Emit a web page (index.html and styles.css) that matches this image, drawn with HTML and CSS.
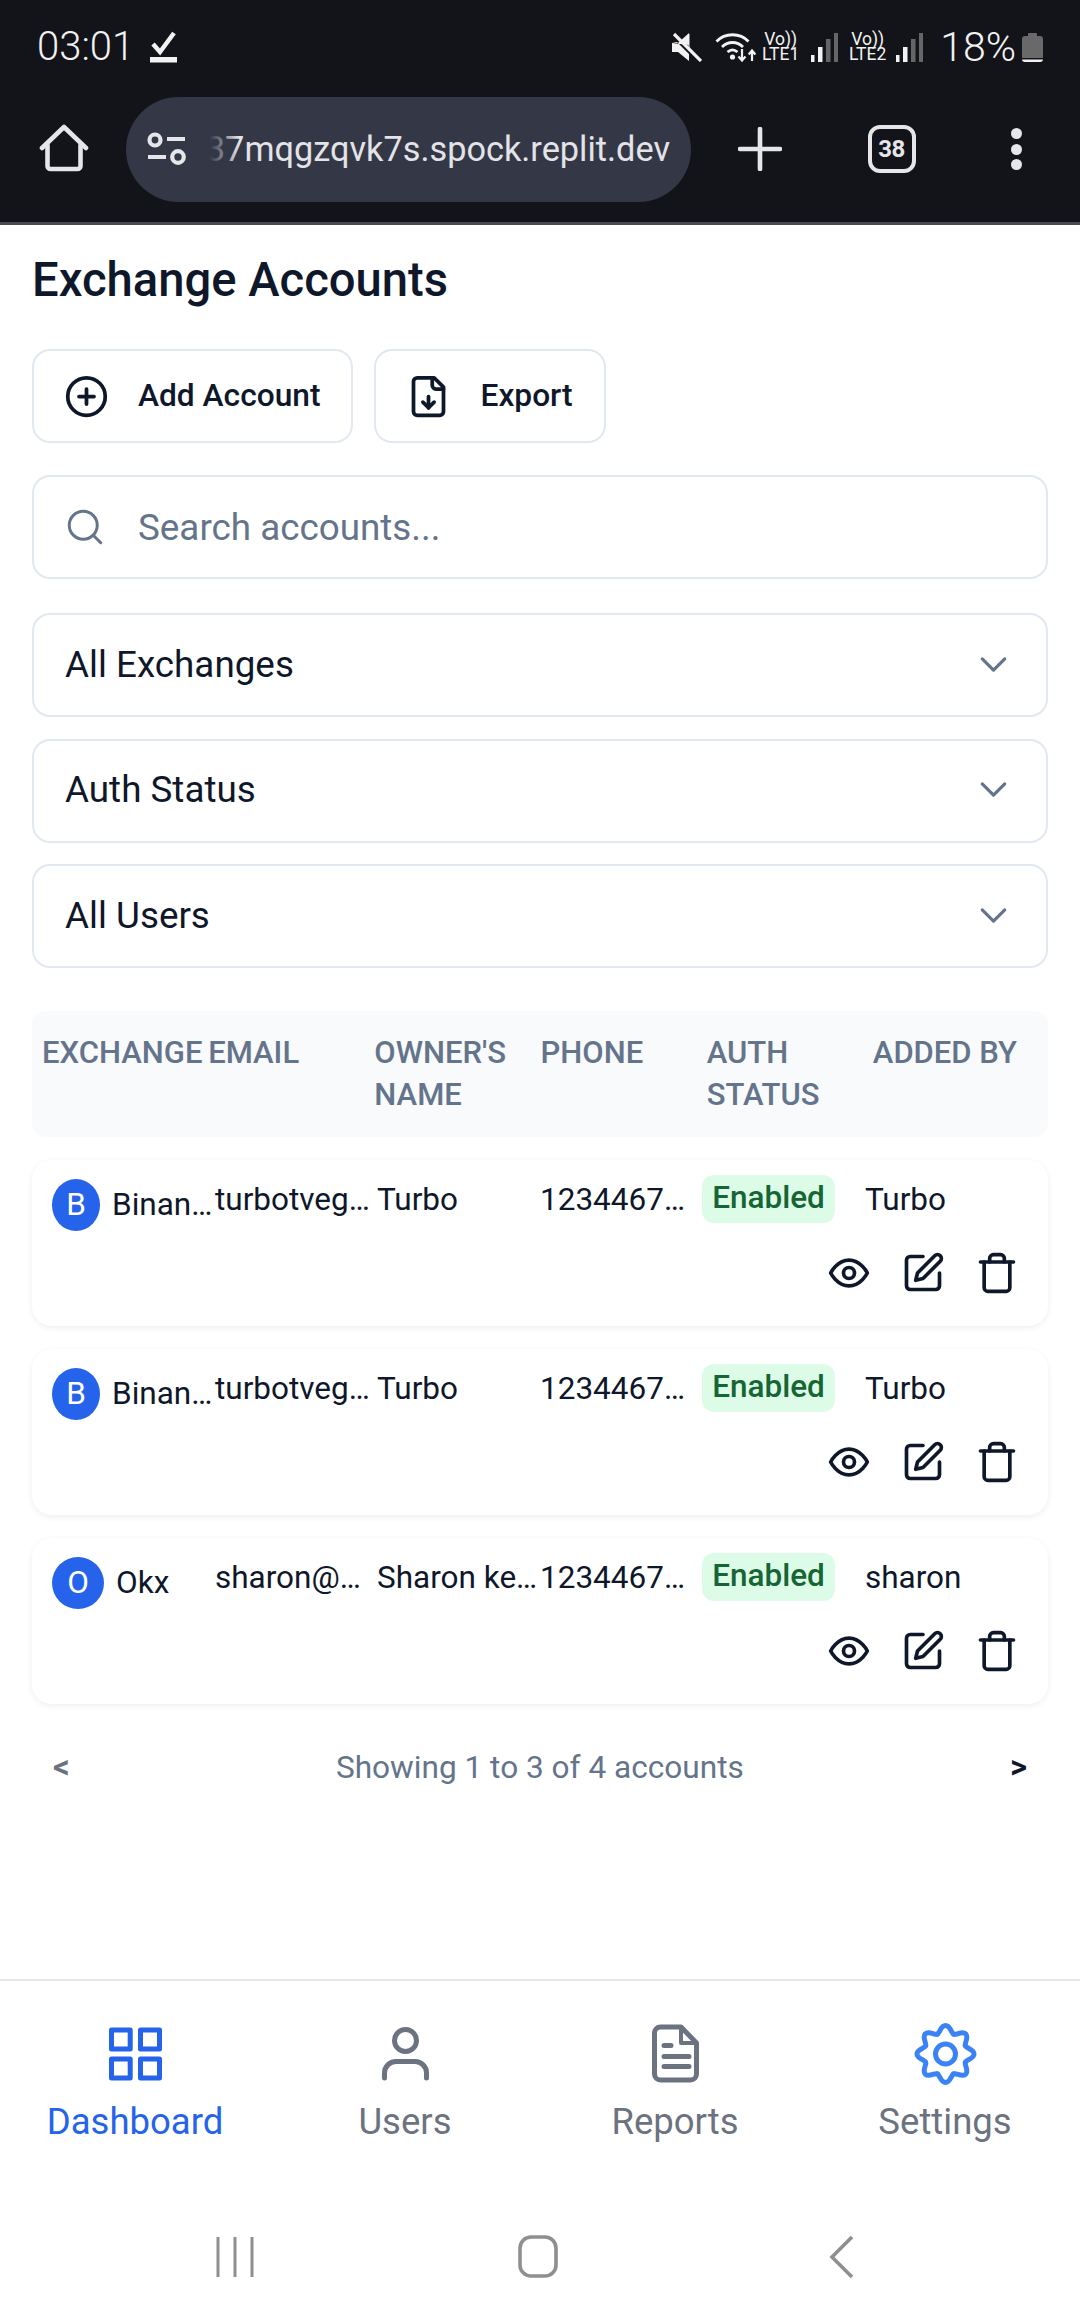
FILE: index.html
```html
<!DOCTYPE html>
<html lang="en">
<head>
<meta charset="utf-8">
<title>Exchange Accounts</title>
<link rel="stylesheet" href="styles.css">
</head>
<body>
<div class="app">
  <header class="chrome">
    <div class="status">
      <div class="status-left">
        <span class="time">03:01</span>
        <svg class="ic-check" viewBox="0 0 28 32" width="28" height="32"><path d="M3 13l7 8L24 2" fill="none" stroke="#f2f2f2" stroke-width="4.5"/><rect x="0" y="26" width="27" height="5.5" fill="#f2f2f2"/></svg>
      </div>
      <div class="status-right">
        <svg viewBox="0 0 30 30" width="30" height="30"><path d="M0 11h6L17 1v12zM0 11v9h6l11 9V22L5 10z" fill="#f2f2f2"/><path d="M2 2l27 27" stroke="#f2f2f2" stroke-width="3.2"/><path d="M17 2v17" stroke="#f2f2f2" stroke-width="1"/></svg>
        <svg class="ml13" viewBox="0 0 41 30" width="41" height="30"><g fill="none" stroke="#f2f2f2" stroke-width="2.8"><path d="M1.5 9.5C10 0.5 25 0.5 33.5 9.5"/><path d="M7 15c6-6 15-6 21 0"/><path d="M12.5 20c3.5-3 6.5-3 10 0"/></g><circle cx="17.5" cy="25" r="2.6" fill="#f2f2f2"/><path d="M27 17v11M23.5 24.5l3.5 4 3.5-4M37 29V19M33.7 22.5l3.3-4 3.3 4" fill="none" stroke="#f2f2f2" stroke-width="2.2"/></svg>
        <div class="net ml5">Vo))<br>LTE1</div>
        <svg class="ml11" viewBox="0 0 27 30" width="27" height="30"><rect x="0" y="23" width="3.5" height="7" fill="#f2f2f2"/><rect x="7" y="15" width="4.5" height="15" fill="#f2f2f2"/><rect x="15" y="7" width="4.5" height="23" fill="#666"/><rect x="23" y="1" width="4" height="29" fill="#666"/></svg>
        <div class="net ml10">Vo))<br>LTE2</div>
        <svg class="ml9" viewBox="0 0 27 30" width="27" height="30"><rect x="0" y="23" width="3.5" height="7" fill="#f2f2f2"/><rect x="7" y="15" width="4.5" height="15" fill="#f2f2f2"/><rect x="15" y="7" width="4.5" height="23" fill="#666"/><rect x="23" y="1" width="4" height="29" fill="#666"/></svg>
        <span class="pct ml17">18%</span>
        <svg class="ml6" viewBox="0 0 21 30" width="21" height="30"><path d="M6 2a1 1 0 0 1 1-1h7a1 1 0 0 1 1 1v2h3a3 3 0 0 1 3 3v19H0V7a3 3 0 0 1 3-3h3z" fill="#696969"/><path d="M0 27.500h21V27a3 3 0 0 1-3 3H3a3 3 0 0 1-3-3z" fill="#f2f2f2"/></svg>
      </div>
    </div>
    <div class="toolbar">
      <svg class="ic-home" viewBox="0 0 50 50" width="50" height="50"><g fill="none" stroke="#e6e6ea" stroke-width="4.6" stroke-linecap="round" stroke-linejoin="round"><path d="M3 24L25 3l22 21"/><path d="M8.500 21v21a3 3 0 0 0 3 3h27a3 3 0 0 0 3-3V21"/></g></svg>
      <div class="urlbar">
        <svg class="ic-tune" viewBox="0 0 40 34" width="40" height="34"><g fill="none" stroke="#e6e6ea" stroke-width="4.200"><circle cx="8" cy="8" r="5.500"/><circle cx="31" cy="25" r="5.800"/><path d="M20 7h18M1 25h18"/></g></svg>
        <div class="url"><span>37mqgzqvk7s.spock.replit.dev</span></div>
      </div>
      <svg class="ic-plus" viewBox="0 0 44 44" width="44" height="44"><path d="M2 22h40M22 2v40" stroke="#e6e6ea" stroke-width="4.600" stroke-linecap="round"/></svg>
      <div class="tabs-count">38</div>
      <div class="dots"><i></i><i></i><i></i></div>
    </div>
  </header>

  <main class="page">
    <h1 class="title">Exchange Accounts</h1>
    <div class="actions-bar">
      <button class="btn">
        <svg class="i45" viewBox="0 0 24 24"><circle cx="12" cy="12" r="10"/><path d="M8 12h8M12 8v8"/></svg>
        <span>Add Account</span>
      </button>
      <button class="btn">
        <svg class="i45" viewBox="0 0 24 24"><path d="M15 2H6a2 2 0 0 0-2 2v16a2 2 0 0 0 2 2h12a2 2 0 0 0 2-2V7Z"/><path d="M14 2v4a2 2 0 0 0 2 2h4"/><path d="M12 18v-6"/><path d="m9 15 3 3 3-3"/></svg>
        <span>Export</span>
      </button>
    </div>
    <div class="field search">
      <svg class="i45 muted thin" viewBox="0 0 24 24"><circle cx="11" cy="11" r="8"/><path d="m21 21-4.300-4.300"/></svg>
      <span>Search accounts...</span>
    </div>
    <div class="filters">
      <div class="field select"><span>All Exchanges</span><svg class="i45 muted thin" viewBox="0 0 24 24"><path d="m6 9 6 6 6-6"/></svg></div>
      <div class="field select"><span>Auth Status</span><svg class="i45 muted thin" viewBox="0 0 24 24"><path d="m6 9 6 6 6-6"/></svg></div>
      <div class="field select"><span>All Users</span><svg class="i45 muted thin" viewBox="0 0 24 24"><path d="m6 9 6 6 6-6"/></svg></div>
    </div>

    <div class="thead">
      <div>Exchange</div><div>Email</div><div>Owner's Name</div><div>Phone</div><div>Auth Status</div><div>Added By</div>
    </div>

    <article class="card">
      <div class="cell exch"><span class="avatar squeezed">B</span><span>Binan…</span></div>
      <div class="cell">turbotveg…</div>
      <div class="cell">Turbo</div>
      <div class="cell">1234467…</div>
      <div class="cell"><span class="badge">Enabled</span></div>
      <div class="cell">Turbo</div>
      <div class="row-actions">
        <svg class="i45" viewBox="0 0 24 24"><path d="M2 12s3.500-7 10-7 10 7 10 7-3.500 7-10 7-10-7-10-7Z"/><circle cx="12" cy="12" r="3"/></svg>
        <svg class="i45" viewBox="0 0 24 24"><path d="M12 3H5a2 2 0 0 0-2 2v14a2 2 0 0 0 2 2h14a2 2 0 0 0 2-2v-7"/><path d="M18.400 2.600a2.120 2.120 0 0 1 3 3L12 15l-4 1 1-4Z"/></svg>
        <svg class="i45" viewBox="0 0 24 24"><path d="M3 6h18"/><path d="M19 6v14c0 1-1 2-2 2H7c-1 0-2-1-2-2V6"/><path d="M8 6V4c0-1 1-2 2-2h4c1 0 2 1 2 2v2"/></svg>
      </div>
    </article>
    <article class="card">
      <div class="cell exch"><span class="avatar squeezed">B</span><span>Binan…</span></div>
      <div class="cell">turbotveg…</div>
      <div class="cell">Turbo</div>
      <div class="cell">1234467…</div>
      <div class="cell"><span class="badge">Enabled</span></div>
      <div class="cell">Turbo</div>
      <div class="row-actions">
        <svg class="i45" viewBox="0 0 24 24"><path d="M2 12s3.500-7 10-7 10 7 10 7-3.500 7-10 7-10-7-10-7Z"/><circle cx="12" cy="12" r="3"/></svg>
        <svg class="i45" viewBox="0 0 24 24"><path d="M12 3H5a2 2 0 0 0-2 2v14a2 2 0 0 0 2 2h14a2 2 0 0 0 2-2v-7"/><path d="M18.400 2.600a2.120 2.120 0 0 1 3 3L12 15l-4 1 1-4Z"/></svg>
        <svg class="i45" viewBox="0 0 24 24"><path d="M3 6h18"/><path d="M19 6v14c0 1-1 2-2 2H7c-1 0-2-1-2-2V6"/><path d="M8 6V4c0-1 1-2 2-2h4c1 0 2 1 2 2v2"/></svg>
      </div>
    </article>
    <article class="card">
      <div class="cell exch"><span class="avatar">O</span><span>Okx</span></div>
      <div class="cell">sharon@…</div>
      <div class="cell">Sharon ke…</div>
      <div class="cell">1234467…</div>
      <div class="cell"><span class="badge">Enabled</span></div>
      <div class="cell">sharon</div>
      <div class="row-actions">
        <svg class="i45" viewBox="0 0 24 24"><path d="M2 12s3.500-7 10-7 10 7 10 7-3.500 7-10 7-10-7-10-7Z"/><circle cx="12" cy="12" r="3"/></svg>
        <svg class="i45" viewBox="0 0 24 24"><path d="M12 3H5a2 2 0 0 0-2 2v14a2 2 0 0 0 2 2h14a2 2 0 0 0 2-2v-7"/><path d="M18.400 2.600a2.120 2.120 0 0 1 3 3L12 15l-4 1 1-4Z"/></svg>
        <svg class="i45" viewBox="0 0 24 24"><path d="M3 6h18"/><path d="M19 6v14c0 1-1 2-2 2H7c-1 0-2-1-2-2V6"/><path d="M8 6V4c0-1 1-2 2-2h4c1 0 2 1 2 2v2"/></svg>
      </div>
    </article>

    <div class="pager">
      <span class="page-btn off">&lt;</span>
      <span>Showing 1 to 3 of 4 accounts</span>
      <span class="page-btn">&gt;</span>
    </div>
  </main>

  <footer class="bottom">
    <nav class="tabs">
      <div class="tab active">
        <svg viewBox="0 0 70 70" width="70" height="70"><g fill="none" stroke="#2563eb" stroke-width="5" stroke-linejoin="round"><rect x="11.500" y="11" width="18.700" height="19"/><rect x="40.500" y="11" width="19" height="19"/><rect x="11.500" y="40" width="18.700" height="19"/><rect x="40.500" y="40" width="19" height="19"/></g></svg>
        <span>Dashboard</span>
      </div>
      <div class="tab">
        <svg viewBox="0 0 70 70" width="70" height="70"><g fill="none" stroke="#6b7280" stroke-width="5" stroke-linecap="round"><circle cx="35.500" cy="21.500" r="11"/><path d="M14.500 59v-5A11.500 11.500 0 0 1 26 42.500h19A11.500 11.500 0 0 1 56.500 54v5"/></g></svg>
        <span>Users</span>
      </div>
      <div class="tab">
        <svg viewBox="0 0 70 70" width="70" height="70"><g fill="none" stroke="#6b7280" stroke-width="5" stroke-linecap="round" stroke-linejoin="round"><path d="M20.500 8H41L56.500 24V55a6 6 0 0 1-6 6h-30a6 6 0 0 1-6-6V14a6 6 0 0 1 6-6Z"/><path d="M41 8v16h15.500" stroke-width="4"/><path d="M24 26.500h7M24 37.500h25M24 47.500h25"/></g></svg>
        <span>Reports</span>
      </div>
      <div class="tab">
        <svg viewBox="0 0 70 70" width="70" height="70"><defs><path id="lobe" d="M-8.230-19.860C-5.460-21-5-28.500 0-28.500S5.460-21 8.230-19.860"/></defs><g transform="translate(35.500 35)" fill="none" stroke="#3b82f6" stroke-width="5" stroke-linecap="round"><use href="#lobe"/><use href="#lobe" transform="rotate(45)"/><use href="#lobe" transform="rotate(90)"/><use href="#lobe" transform="rotate(135)"/><use href="#lobe" transform="rotate(180)"/><use href="#lobe" transform="rotate(225)"/><use href="#lobe" transform="rotate(270)"/><use href="#lobe" transform="rotate(315)"/><circle r="10"/></g></svg>
        <span>Settings</span>
      </div>
    </nav>
    <div class="sysnav">
      <svg viewBox="0 0 40 44" width="40" height="44"><path d="M3 2v40M20 2v40M37 2v40" stroke="#8f8f8f" stroke-width="3"/></svg>
      <svg viewBox="0 0 44 46" width="44" height="46"><rect x="4" y="3" width="36" height="39" rx="11" fill="none" stroke="#8f8f8f" stroke-width="3.600"/></svg>
      <svg viewBox="0 0 30 46" width="30" height="46"><path d="M26 3 6 23l20 20" fill="none" stroke="#8f8f8f" stroke-width="3.600"/></svg>
    </div>
  </footer>
</div>
</body>
</html>
```
FILE: styles.css
```css
* { box-sizing: border-box; }
html, body { margin: 0; padding: 0; }
body { background: #fff; font-family: Roboto, "Noto Sans", sans-serif; color: #0f172a; }
.app { width: 1080px; height: 2316px; display: flex; flex-direction: column; overflow: hidden; }

/* browser chrome */
.chrome { height: 225px; background: #13141a; border-bottom: 3px solid #4a4a55; flex: none; }
.status { height: 94px; padding: 0 37px; display: flex; align-items: center; justify-content: space-between; color: #f2f2f2; }
.status-left { display: flex; align-items: center; }
.status-right { display: flex; align-items: center; }
.time { font-size: 40px; font-weight: 300; line-height: 40px; }
.ic-check { margin-left: 16px; }
.net { width: 39px; font-size: 17.500px; line-height: 15.500px; text-align: center; white-space: nowrap; color: #f2f2f2; }
.pct { font-size: 41px; font-weight: 300; line-height: 40px; }
.ml5 { margin-left: 5px; } .ml6 { margin-left: 6px; } .ml9 { margin-left: 9px; } .ml10 { margin-left: 10px; }
.ml11 { margin-left: 11px; } .ml13 { margin-left: 13px; } .ml17 { margin-left: 17px; }

.toolbar { height: 110px; display: flex; align-items: center; padding-left: 39px; }
.urlbar { margin-left: 37px; width: 565px; height: 105px; border-radius: 53px; background: #343846; display: flex; align-items: center; padding: 0 21px 0 21px; }
.url { position: relative; flex: 1; min-width: 0; margin-left: 22px; height: 44px; display: flex; justify-content: flex-end; color: #e3e3e8; font-size: 34.300px; line-height: 44px; white-space: nowrap; }
.url::before { content: ""; position: absolute; left: -12px; top: 0; bottom: 0; width: 42px; background: linear-gradient(90deg, #343846 30%, rgba(52,56,70,0)); }
.ic-plus { margin-left: 46.500px; }
.tabs-count { margin-left: 86px; width: 48px; height: 48px; border: 4.500px solid #e6e6ea; border-radius: 12px; color: #e6e6ea; font-size: 24px; font-weight: 700; display: flex; align-items: center; justify-content: center; letter-spacing: -.5px; }
.dots { margin-left: 95.500px; display: flex; flex-direction: column; gap: 4.500px; }
.dots i { display: block; width: 11px; height: 11px; border-radius: 50%; background: #e6e6ea; }

/* page */
.page { flex: 1; padding: 0 32px; min-height: 0; }
.title { margin: 25px 0 0; font-size: 47.200px; font-weight: 500; line-height: 60px; color: #0f172a; }
.i45 { width: 45px; height: 45px; flex: none; fill: none; stroke: #0f172a; stroke-width: 2; stroke-linecap: round; stroke-linejoin: round; }
.i45.muted { stroke: #64748b; }
.i45.thin { stroke-width: 1.700; }
.actions-bar { display: flex; gap: 21px; margin-top: 39px; }
.btn { height: 94px; padding: 0 31px 0 30px; background: #fff; border: 2px solid #e2e8f0; border-radius: 18px; display: flex; align-items: center; gap: 29px; font: 500 31.700px Roboto, sans-serif; color: #0f172a; }
.btn span { margin-bottom: 2px; }
.field { height: 104px; border: 2px solid #e2e8f0; border-radius: 18px; background: #fff; display: flex; align-items: center; padding: 0 30px; font-size: 36.800px; }
.search { margin-top: 32px; gap: 32px; color: #64748b; }
.search svg { width: 42px; height: 42px; }
.filters { margin-top: 34px; display: flex; flex-direction: column; gap: 21.500px; }
.select { justify-content: space-between; color: #0f172a; padding: 0 30px 2px 31px; }

.thead { margin-top: 43px; height: 126px; background: #f8fafc; border-radius: 14px; padding: 21px 9px 21px 10px; display: grid; grid-template-columns: repeat(6, 1fr); font-size: 31px; font-weight: 500; line-height: 42px; color: #64748b; text-transform: uppercase; }
.card { margin-top: 23px; height: 166px; background: #fff; border-radius: 20px; box-shadow: 0 2px 6px rgba(15,23,42,.07); padding: 19px 29px 0 20px; display: grid; grid-template-columns: 163px 162px 163px 162px 163px 1fr; grid-template-rows: 52px 45px; row-gap: 19px; font-size: 31.500px; line-height: 42px; }
.cell { white-space: nowrap; }
.exch { display: flex; align-items: center; gap: 12px; height: 52px; }
.avatar { width: 52px; height: 52px; border-radius: 50%; background: #2563eb; color: #fff; display: flex; align-items: center; justify-content: center; flex: none; }
.avatar.squeezed { width: 48px; }
.badge { display: block; width: 133px; height: 48px; margin-top: -4px; background: #dcfce7; color: #166534; border-radius: 12px; font-weight: 500; text-align: center; line-height: 46px; }
.row-actions { grid-column: 1 / -1; display: flex; justify-content: flex-end; align-items: center; gap: 30px; }
.row-actions .i45 { width: 44px; height: 44px; }

.pager { margin-top: 42px; padding: 0 21px; display: flex; align-items: center; justify-content: space-between; font-size: 31.600px; line-height: 42px; color: #64748b; }
.page-btn { font-size: 33px; font-weight: 600; color: #0f172a; margin-bottom: 2px; }
.page-btn.off { color: #6b7280; }

/* bottom */
.bottom { flex: none; background: #fff; }
.tabs { border-top: 2px solid #e5e7eb; height: 219px; padding-top: 37.500px; display: grid; grid-template-columns: repeat(4, 1fr); }
.tab { display: flex; flex-direction: column; align-items: center; gap: 11px; color: #6b7280; font-size: 36.500px; line-height: 44px; }
.tab.active { color: #2563eb; }
.sysnav { height: 118px; display: grid; grid-template-columns: repeat(3, 303px); justify-content: center; justify-items: center; align-items: center; padding-right: 4px; }
```
